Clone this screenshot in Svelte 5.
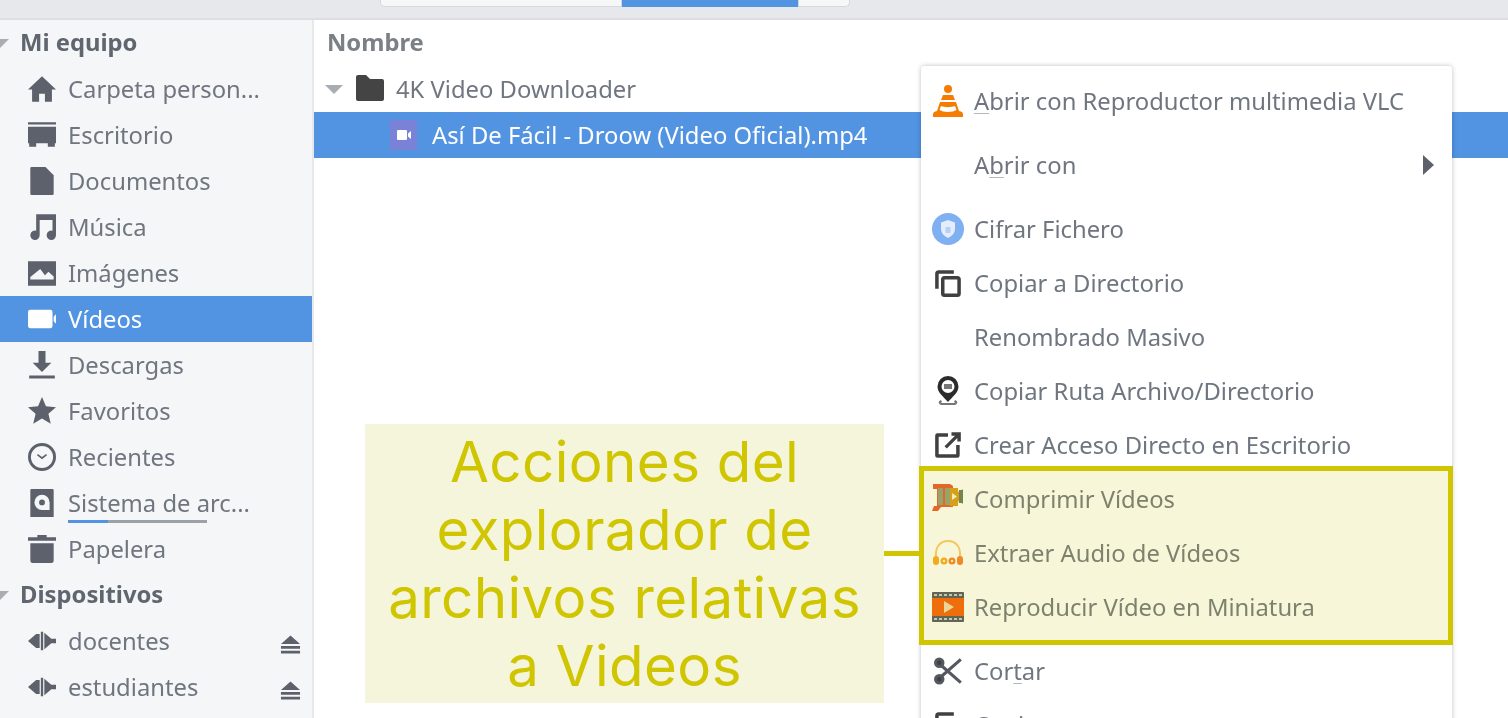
<script>
	const places = [
		{ label: 'Carpeta person...', icon: 'home' },
		{ label: 'Escritorio', icon: 'desktop' },
		{ label: 'Documentos', icon: 'doc' },
		{ label: 'Música', icon: 'music' },
		{ label: 'Imágenes', icon: 'image' },
		{ label: 'Vídeos', icon: 'video', active: true },
		{ label: 'Descargas', icon: 'download' },
		{ label: 'Favoritos', icon: 'star' },
		{ label: 'Recientes', icon: 'clock' },
		{ label: 'Sistema de arc...', icon: 'disk', usage: true },
		{ label: 'Papelera', icon: 'trash' }
	];

	const icons = {
		home: 'M12 1 0 12.500h3.500V23h6v-7h5v7h6V12.500H24z',
		desktop: 'M0 1h24v2H0zM0 5h24v14h-1v3h-6v-3H7v3H1v-3H0z',
		doc: 'M2 1a1 1 0 0 1 1-1h12l7 7v16a1 1 0 0 1-1 1H3a1 1 0 0 1-1-1z',
		music: 'M7 1h17v18a4 4 0 1 1-3-3.800V6H10v13a4 4 0 1 1-3-3.800z',
		image: 'M0 2h24v21H0zm2 15.500h20V15l-4.500-4-3 3-4-5.500-8.500 7z',
		video: 'M0 6a2 2 0 0 1 2-2h17a2 2 0 0 1 2 2v12a2 2 0 0 1-2 2H2a2 2 0 0 1-2-2zM22 10l2-2v8l-2-2z',
		download: 'M9 0h6v10h5l-8 8-8-8h5zM1 21h22v2.500H1z',
		star: 'M12 0l3.400 8 8.600.8-6.500 5.600 2 8.600L12 18.500 4.500 23l2-8.600L0 8.800 8.600 8z',
		clock: 'M12 0a12 12 0 1 0 0 24 12 12 0 0 0 0-24zm0 2.500a9.500 9.500 0 1 1 0 19 9.500 9.500 0 0 1 0-19zM8.500 9.500 12 12l3.500-2.500.8 1L12 14l-4.300-3.500z',
		disk: 'M3 0h18a1 1 0 0 1 1 1v23H2V1a1 1 0 0 1 1-1zm9 5a6.500 6.500 0 1 0 0 13h6.500v-6.500A6.500 6.500 0 0 0 12 5zm0 4a2.500 2.500 0 1 1 0 5 2.500 2.500 0 0 1 0-5z',
		trash: 'M8 0h8v2h8v3H0V2h8zM2 7h20v15a2 2 0 0 1-2 2H4a2 2 0 0 1-2-2z',
		network: 'M0 12 7 6h3v12H7zM11 4h2v16h-2zM14 5l6 5h4v4h-4l-6 5z',
		copy: 'M4 1h13v3H4v13H1V4a3 3 0 0 1 3-3zM9 6h11a3 3 0 0 1 3 3v12a3 3 0 0 1-3 3H9a3 3 0 0 1-3-3V9a3 3 0 0 1 3-3zm0 3v12h11V9z',
		link: 'M3 2h9v3H4v15h15v-8h3v9a2 2 0 0 1-2 2H3a2 2 0 0 1-2-2V4a2 2 0 0 1 2-2zM15 1h8v8h-3V6l-9 9-2-2 9-9h-3z'
	};
</script>

<div class="window">
	<div class="toolbar">
		<div class="pathbar">
			<span class="crumb wide"></span>
			<span class="crumb current"></span>
			<span class="crumb end"></span>
		</div>
	</div>

	<div class="panes">
		<aside class="sidebar">
			<div class="heading"><span class="tri"></span><span>Mi equipo</span></div>
			{#each places as place}
				<div class="place" class:active={place.active}>
					<svg class="icon" viewBox="0 0 24 24"><path fill-rule="evenodd" d={icons[place.icon]} /></svg>
					<span class="place-label" class:usage={place.usage}>{place.label}</span>
				</div>
			{/each}
			<div class="heading"><span class="tri"></span><span>Dispositivos</span></div>
			{#each ['docentes', 'estudiantes'] as share}
				<div class="place">
					<svg class="icon net" viewBox="0 0 24 24"><path d={icons.network} /></svg>
					<span class="place-label">{share}</span>
					<svg class="eject" viewBox="0 0 22 20"><path d="M11 0l10 9H1zM1 11h20v3H1zM1 16h20v3H1z" /></svg>
				</div>
			{/each}
		</aside>

		<main class="files">
			<div class="column-title"><span>Nombre</span></div>
			<div class="file-row">
				<span class="tri big"></span>
				<svg class="folder" viewBox="0 0 30 27"><path d="M1 3a2 2 0 0 1 2-2h8l4 4h12a2 2 0 0 1 2 2v18a2 2 0 0 1-2 2H3a2 2 0 0 1-2-2z" /></svg>
				<span>4K Video Downloader</span>
			</div>
			<div class="file-row selected">
				<span class="video-thumb">
					<svg viewBox="0 0 14 10"><path d="M0 1a1 1 0 0 1 1-1h8a1 1 0 0 1 1 1v8a1 1 0 0 1-1 1H1a1 1 0 0 1-1-1zM11 3.500 14 1v8l-3-2.500z" /></svg>
				</span>
				<span>Así De Fácil - Droow (Video Oficial).mp4</span>
			</div>
		</main>
	</div>

	<div class="menu">
		<div class="item">
			<svg class="micon" viewBox="0 0 32 32">
				<circle cx="16" cy="4" r="4" fill="#f57c00" />
				<path d="M11 10h10l2 5H9zM8 17h16l3 9c3 .5 4 1.500 4 3.500V32H1v-2.500C1 27.500 2 26.500 5 26z" fill="#f57c00" />
				<path d="M9 21c3 1.500 11 1.500 14 0l1.500 4c-4 2.500-13 2.500-17 0z" fill="#fff" />
			</svg>
			<span><u>A</u>brir con Reproductor multimedia VLC</span>
		</div>
		<div class="gap"></div>
		<div class="item">
			<span class="micon"></span>
			<span>A<u>b</u>rir con</span>
			<span class="arrow"></span>
		</div>
		<div class="gap"></div>
		<div class="item">
			<svg class="micon" viewBox="0 0 32 32">
				<circle cx="16" cy="16" r="16" fill="#7fb0f2" />
				<path d="M16 7l7 2.500v6.500c0 4.500-3.500 7-7 9-3.500-2-7-4.500-7-9V9.500z" fill="#e4edfb" />
				<rect x="13.500" y="14" width="5" height="6" rx="1" fill="#b5cff6" />
			</svg>
			<span>Cifrar Fichero</span>
		</div>
		<div class="item">
			<svg class="micon dark" viewBox="0 0 24 24"><path fill-rule="evenodd" d={icons.copy} /></svg>
			<span>Copiar a Directorio</span>
		</div>
		<div class="item">
			<span class="micon"></span>
			<span>Renombrado Masivo</span>
		</div>
		<div class="item">
			<svg class="micon" viewBox="0 0 32 32">
				<path fill="#2b2b2b" fill-rule="evenodd" d="M16 1a10.500 10.500 0 0 1 10.500 10.500C26.500 18 20 22 16 27c-4-5-10.500-9-10.500-15.500A10.500 10.500 0 0 1 16 1zm0 4a6.500 6.500 0 1 0 0 13 6.500 6.500 0 0 0 0-13z" />
				<rect x="12" y="9" width="8" height="5" fill="#777" />
				<path d="M9 25c-3 1-3 4 0 5h14c3-1 3-4 0-5l-1 2c1 .5 1 1 0 1H10c-1 0-1-.5 0-1z" fill="#777" />
			</svg>
			<span>Copiar Ruta Archivo/Directorio</span>
		</div>
		<div class="item">
			<svg class="micon dark" viewBox="0 0 24 24"><path d={icons.link} /></svg>
			<span>Crear Acceso Directo en Escritorio</span>
		</div>
		<div class="item">
			<svg class="micon" viewBox="0 0 32 32">
				<path d="M1 1h17l3 2v21H9l-3 4H0l2-5h3V6H1z" fill="#e8572f" />
				<rect x="6" y="5" width="5" height="17" fill="#8f9e7e" />
				<rect x="13" y="5" width="5" height="17" fill="#8f9e7e" />
				<path d="M18 5h8v4l5-3v15l-5-3v5h-8z" fill="#d89a1e" />
				<path d="M20 10l5 3.500-5 3.500z" fill="#f5f5dc" />
				<rect x="27" y="7" width="4" height="13" fill="#667a60" />
			</svg>
			<span>Comprimir Vídeos</span>
		</div>
		<div class="item">
			<svg class="micon" viewBox="0 0 32 32">
				<path d="M4 20C3 10 8 4 16 4s13 6 12 16" fill="none" stroke="#f9c86a" stroke-width="2" />
				<rect x="1" y="19" width="6" height="9" rx="3" fill="#f7a823" />
				<rect x="25" y="19" width="6" height="9" rx="3" fill="#f2822c" />
				<circle cx="12" cy="24" r="3.500" fill="#f7a823" />
				<circle cx="20" cy="24" r="3.500" fill="#f2822c" />
				<circle cx="12" cy="24" r="1.200" fill="#f5f5dc" />
				<circle cx="20" cy="24" r="1.200" fill="#f5f5dc" />
			</svg>
			<span>Extraer Audio de Vídeos</span>
		</div>
		<div class="item">
			<svg class="micon" viewBox="0 0 32 32">
				<rect y="1" width="32" height="30" rx="1" fill="#4e5563" />
				<rect y="7" width="32" height="18" fill="#f4600f" />
				<path d="M12 10l10 6-10 6z" fill="#f3d9b0" />
				<path d="M2 3h3v2H2zM7 3h3v2H7zM12 3h3v2h-3zM17 3h3v2h-3zM22 3h3v2h-3zM27 3h3v2h-3zM2 27h3v2H2zM7 27h3v2H7zM12 27h3v2h-3zM17 27h3v2h-3zM22 27h3v2h-3zM27 27h3v2h-3z" fill="#c4c8cf" />
			</svg>
			<span>Reproducir Vídeo en Miniatura</span>
		</div>
		<div class="gap"></div>
		<div class="item">
			<svg class="micon dark" viewBox="0 0 24 24" fill="none" stroke="#55585f" stroke-width="2.600">
				<circle cx="4.500" cy="5" r="3.200" />
				<circle cx="4.500" cy="19" r="3.200" />
				<path d="M6.500 7.500 23 22M6.500 16.500 23 2" />
			</svg>
			<span>Cor<u>t</u>ar</span>
		</div>
		<div class="item">
			<svg class="micon dark" viewBox="0 0 24 24"><path fill-rule="evenodd" d={icons.copy} /></svg>
			<span>Copiar</span>
		</div>
	</div>
</div>

<!-- tutorial annotation drawn over the screenshot -->
<div class="highlight"></div>
<div class="connector"></div>
<div class="callout">Acciones del explorador de archivos relativas a Videos</div>

<style>
	:global(body) {
		margin: 0;
		overflow: hidden;
		background: #fff;
	}

	.window {
		width: 1508px;
		height: 718px;
		display: flex;
		flex-direction: column;
		overflow: hidden;
		font-family: "Noto Sans", sans-serif;
		font-size: 23.8px;
		color: #6f7680;
		filter: blur(0.6px);
	}

	.toolbar {
		height: 18px;
		flex: none;
		background: #e6e8eb;
		border-bottom: 2px solid #dcdee1;
	}

	.pathbar {
		display: flex;
		margin-left: 380px;
		height: 7px;
	}

	.crumb {
		background: #f6f7f8;
		border: 1px solid #d6d8dc;
		border-top: none;
	}

	.crumb.wide {
		width: 242px;
		box-sizing: border-box;
		border-radius: 0 0 0 5px;
	}

	.crumb.current {
		width: 176px;
		background: #5294e2;
		border: none;
	}

	.crumb.end {
		width: 52px;
		box-sizing: border-box;
		border-radius: 0 0 5px 0;
	}

	.panes {
		flex: 1;
		display: flex;
		min-height: 0;
	}

	.sidebar {
		width: 312px;
		flex: none;
		background: #f5f6f7;
		border-right: 2px solid #e6e8eb;
	}

	.heading {
		height: 46px;
		display: flex;
		align-items: center;
		font-weight: 700;
		color: #5f6670;
		padding-left: 20px;
		position: relative;
	}

	.heading > span:last-child,
	.column-title span {
		margin-top: -2px;
	}

	.tri {
		position: absolute;
		left: -9px;
		width: 0;
		height: 0;
		border-left: 9px solid transparent;
		border-right: 9px solid transparent;
		border-top: 9px solid #a9acb1;
		margin-top: 0;
	}

	.place {
		height: 46px;
		display: flex;
		align-items: center;
		padding-left: 28px;
		padding-right: 11px;
		gap: 12px;
	}

	.place.active {
		background: #5294e2;
		color: #fff;
	}

	.icon {
		width: 28px;
		height: 28px;
		fill: #5c616c;
		flex: none;
	}

	.icon.net {
		margin-left: -2px;
		margin-right: -2px;
		width: 32px;
	}

	.active .icon {
		fill: #fff;
	}

	.place-label {
		position: relative;
		flex: 1;
		line-height: 32px;
		white-space: nowrap;
	}

	.usage::after {
		content: "";
		position: absolute;
		left: 0;
		bottom: -4px;
		width: 139px;
		height: 3px;
		background: linear-gradient(to right, #5294e2 40px, #9ba1a8 40px);
	}

	.eject {
		width: 21px;
		height: 20px;
		fill: #5c616c;
		flex: none;
		margin-top: 8px;
	}

	.files {
		flex: 1;
		background: #fff;
	}

	.column-title {
		height: 46px;
		display: flex;
		align-items: center;
		padding-left: 13px;
		font-weight: 700;
		color: #7b8087;
	}

	.file-row {
		height: 46px;
		display: flex;
		align-items: center;
		position: relative;
		padding-left: 41px;
		gap: 11px;
		white-space: nowrap;
	}

	.file-row > span:last-child {
		margin-top: -1px;
	}

	.tri.big {
		left: 11px;
	}

	.folder {
		width: 30px;
		height: 27px;
		fill: #444;
		margin-bottom: 4px;
	}

	.file-row.selected {
		background: #5294e2;
		color: #fff;
		padding-left: 76px;
		gap: 15px;
		width: 1194px;
	}

	.video-thumb {
		width: 27px;
		height: 30px;
		background: #7a82d8;
		display: flex;
		align-items: center;
		justify-content: center;
	}

	.video-thumb svg {
		width: 14px;
		height: 10px;
		fill: #fff;
	}

	.menu {
		position: absolute;
		left: 921px;
		top: 66px;
		width: 531px;
		height: 680px;
		box-sizing: border-box;
		background: #fff;
		border-radius: 3px;
		box-shadow: 0 0 5px rgba(0, 0, 0, 0.25);
		padding-top: 8px;
	}

	.item {
		height: 54px;
		display: flex;
		align-items: center;
		padding-left: 11px;
		gap: 10px;
		position: relative;
		white-space: nowrap;
	}

	.item > span:not(.micon, .arrow) {
		margin-top: -1px;
	}

	.gap {
		height: 10px;
	}

	u {
		text-decoration-thickness: 1px;
		text-underline-offset: 3px;
		text-decoration-color: #b4b7bc;
	}

	.micon {
		width: 32px;
		height: 32px;
		flex: none;
		display: block;
	}

	.dark {
		fill: #404040;
		width: 28px;
		height: 28px;
		margin: 0 2px;
	}

	.arrow {
		position: absolute;
		right: 18px;
		width: 0;
		height: 0;
		border-top: 10px solid transparent;
		border-bottom: 10px solid transparent;
		border-left: 11px solid #5c616c;
	}

	.highlight {
		position: absolute;
		left: 919px;
		top: 466px;
		width: 534px;
		height: 179px;
		box-sizing: border-box;
		border: 5px solid #cfc500;
		background: rgba(207, 197, 0, 0.15);
	}

	.connector {
		position: absolute;
		left: 883px;
		top: 551px;
		width: 37px;
		height: 5px;
		background: #cfc500;
	}

	.callout {
		position: absolute;
		left: 365px;
		top: 424px;
		width: 519px;
		height: 279px;
		box-sizing: border-box;
		padding: 4px 10px;
		background: #f5f5dc;
		color: #cfc500;
		font-family: Inter, sans-serif;
		font-size: 56.5px;
		letter-spacing: 0.4px;
		line-height: 68px;
		text-align: center;
	}
</style>
